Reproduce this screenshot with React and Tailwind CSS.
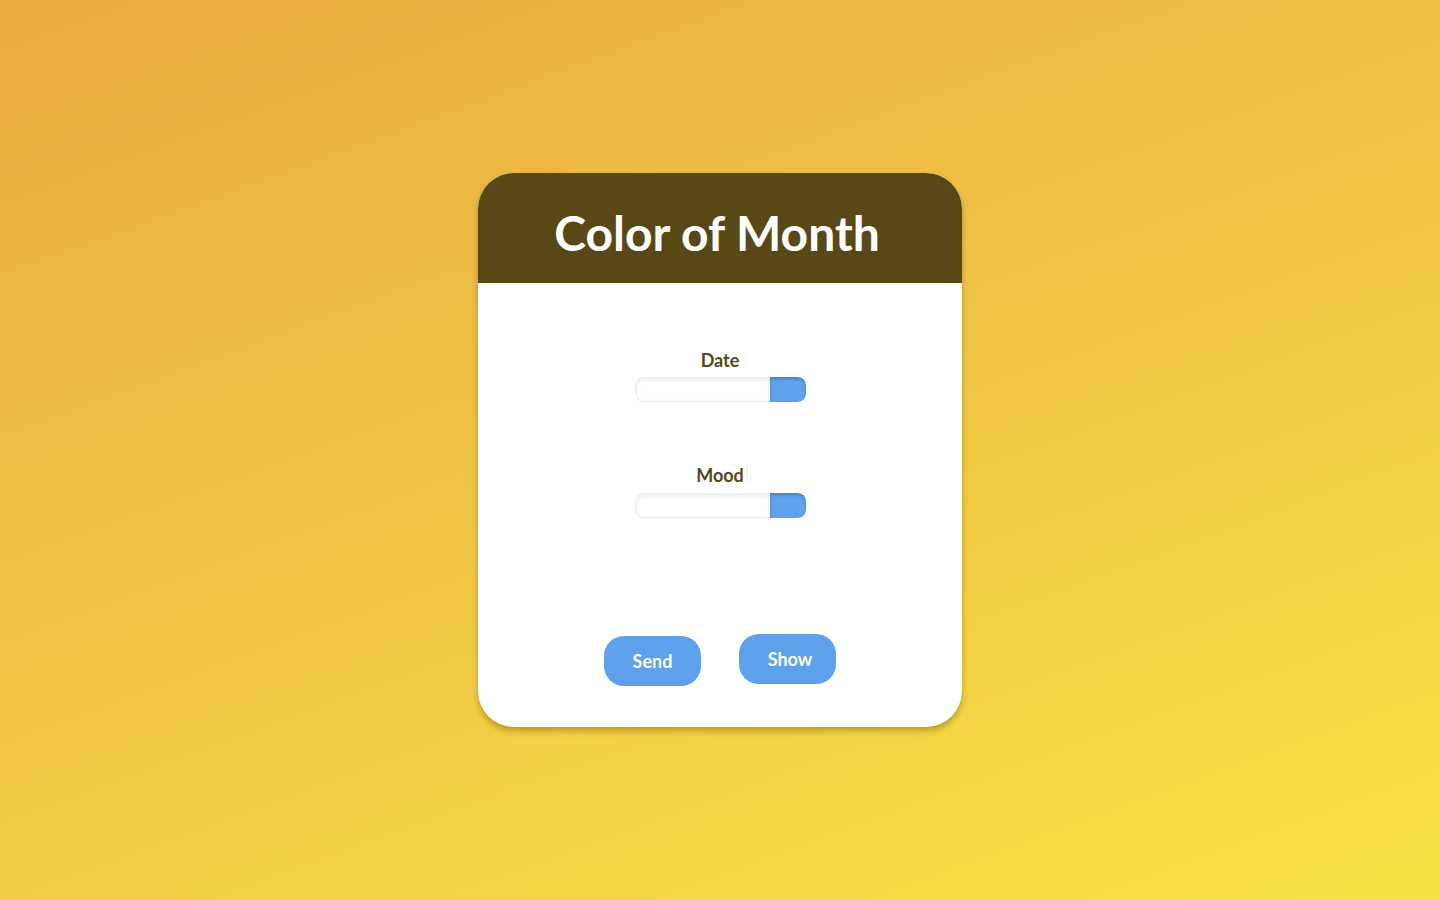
export default function App() {
  const field = (label, mb) => (
    <div className="flex flex-col items-center">
      <label className={"text-[18px] font-bold leading-[22px] text-[#574815] " + mb}>{label}</label>
      <div className="flex w-[171px] h-[25px] rounded-[8px] overflow-hidden">
        <div className="flex-1 bg-white rounded-l-[8px] border border-[#ececec] border-r-0 shadow-[inset_0_2px_4px_rgba(0,0,0,0.08)]"></div>
        <div className="w-[36px] bg-[#5ea1ec] rounded-r-[8px] shadow-[inset_0_2px_3px_rgba(0,0,0,0.2)]"></div>
      </div>
    </div>
  );
  return (
    <div
      className="w-full h-[900px] flex items-start justify-center bg-[linear-gradient(160deg,#ebab3e_0%,#f0c445_45%,#f7e244_100%)]"
      style={{ fontFamily: "Lato, 'Open Sans', sans-serif" }}
    >
      <div className="mt-[173px] w-[484px] h-[554px] bg-white rounded-[36px] overflow-hidden shadow-[0_4px_6px_rgba(120,90,0,0.45)] flex flex-col">
        <div className="h-[110px] bg-[#574815] flex items-center justify-center">
          <h1 className="text-[48px] font-bold text-white leading-none mt-[10px] mr-[6px]">Color of Month</h1>
        </div>
        <div className="flex flex-col items-center pt-[66px]">
          {field("Date", "mb-[6px]")}
          <div className="h-[62px]"></div>
          {field("Mood", "mb-[7px]")}
        </div>
        <div className="flex justify-center gap-[38px] mt-[116px]">
          <button className="w-[97px] h-[50px] rounded-[20px] bg-[#5ea1ec] text-white font-bold text-[18px] mt-[2px]">Send</button>
          <button className="w-[97px] h-[50px] rounded-[20px] bg-[#5ea1ec] text-white font-bold text-[18px] pl-[5px]">Show</button>
        </div>
      </div>
    </div>
  );
}
